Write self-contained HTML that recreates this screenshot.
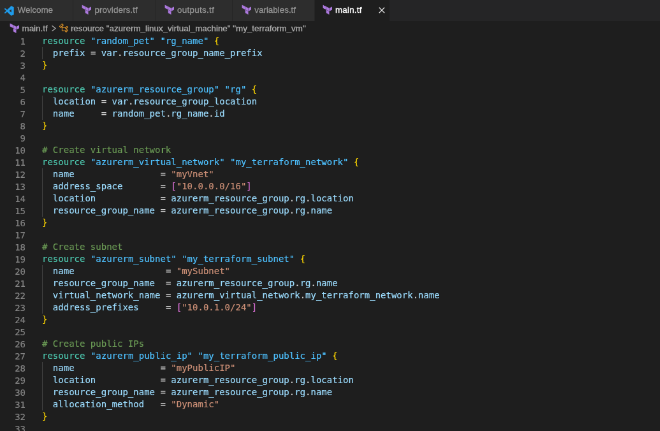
<!DOCTYPE html>
<html><head><meta charset="utf-8"><title>main.tf</title>
<style>
html,body{margin:0;padding:0;background:#1e1e1e;overflow:hidden}
body{width:660px;height:431px;position:relative}
#app{position:absolute;left:0;top:0;width:1036px;height:680px;transform-origin:0 0;transform:scale(0.6374);will-change:transform;background:#1e1e1e;font-family:"Liberation Sans",Arial,sans-serif;color:#ccc}
#tabs{position:absolute;left:0;top:-2.2px;width:100%;height:35px;background:#252526}
.tab{position:absolute;top:0;height:35px;background:#2d2d2d;border-right:1px solid #252526;box-sizing:border-box;color:#969696;font-size:13.4px;line-height:35px;white-space:nowrap}
.tab.act{background:#1e1e1e;color:#fff}
.tab .lbl{position:absolute;top:0;-webkit-text-stroke:.3px currentColor}
#bc span{-webkit-text-stroke:.3px currentColor}
#ed{-webkit-text-stroke:.2px currentColor}
.tfi{position:absolute;width:16px;height:16px}
#bc{position:absolute;left:0;top:32.8px;width:100%;height:22px;background:#1e1e1e;color:#b0b0b0;font-size:13.4px;line-height:22px;white-space:nowrap}
#bc span{position:absolute;top:1.4px}
#ed{position:absolute;left:0;top:55.1px;width:100%;height:640px;font-family:"DejaVu Sans Mono","Liberation Mono",monospace;font-size:14px;line-height:19px;color:#d4d4d4}
.ln{position:absolute;left:0;height:19px;width:100%;white-space:pre}
.num{position:absolute;left:0;top:1px;width:40px;text-align:right;color:#858585}
.tx{position:absolute;left:66px;top:0}
.g{position:absolute;left:65.95px;width:1.5px;background:#404040}
.c{color:#6a9955}.k{color:#4ec9b0}.e{color:#4fc1ff}.v{color:#9cdcfe}.o{color:#d4d4d4}.s{color:#ce9178}.b1{color:#ffd700}.b2{color:#da70d6}
</style></head><body>
<div id="app">
<div id="tabs">
<div class="tab" style="left:0.0px;width:114.5px"><svg class="tfi" style="left:5.5px;top:11px" viewBox="0 0 16 16"><path fill="#1f9cec" fill-rule="evenodd" d="M11.6 .3L15.7 2.2V13.8L11.6 15.7 5.2 9.8 2.2 12.1 .4 11.2 3.9 8 .4 4.8 2.2 3.9 5.2 6.2zM11.8 5.5L8.4 8l3.4 2.5z"/></svg><span class="lbl" style="left:27.5px;letter-spacing:0.00px">Welcome</span></div>
<div class="tab" style="left:114.5px;width:130.2px"><svg class="tfi" style="left:12.6px;top:9.4px" viewBox="0 0 16 16"><g fill="#ad7adf" stroke="#ad7adf" stroke-width="0.9" transform="translate(1.5,0.5) scale(0.222,0.198)"><path d="M1 1.3l20.6 11.9V37L1 25.1zM23.9 14.5l20.6 11.9v23.8L23.9 38.3zM46.8 26.4l20.6-11.9v23.8L46.8 50.2zM23.9 40.9l20.6 11.9v23.8L23.9 64.7z"/></g></svg><span class="lbl" style="left:33.9px;letter-spacing:0.10px">providers.tf</span></div>
<div class="tab" style="left:244.7px;width:120.0px"><svg class="tfi" style="left:12.6px;top:9.4px" viewBox="0 0 16 16"><g fill="#ad7adf" stroke="#ad7adf" stroke-width="0.9" transform="translate(1.5,0.5) scale(0.222,0.198)"><path d="M1 1.3l20.6 11.9V37L1 25.1zM23.9 14.5l20.6 11.9v23.8L23.9 38.3zM46.8 26.4l20.6-11.9v23.8L46.8 50.2zM23.9 40.9l20.6 11.9v23.8L23.9 64.7z"/></g></svg><span class="lbl" style="left:33.4px;letter-spacing:0.30px">outputs.tf</span></div>
<div class="tab" style="left:364.8px;width:129.4px"><svg class="tfi" style="left:13.3px;top:9.4px" viewBox="0 0 16 16"><g fill="#ad7adf" stroke="#ad7adf" stroke-width="0.9" transform="translate(1.5,0.5) scale(0.222,0.198)"><path d="M1 1.3l20.6 11.9V37L1 25.1zM23.9 14.5l20.6 11.9v23.8L23.9 38.3zM46.8 26.4l20.6-11.9v23.8L46.8 50.2zM23.9 40.9l20.6 11.9v23.8L23.9 64.7z"/></g></svg><span class="lbl" style="left:34.5px;letter-spacing:0.00px">variables.tf</span></div>
<div class="tab act" style="left:494.2px;width:117.7px"><svg class="tfi" style="left:11.0px;top:9.4px" viewBox="0 0 16 16"><g fill="#ad7adf" stroke="#ad7adf" stroke-width="0.9" transform="translate(1.5,0.5) scale(0.222,0.198)"><path d="M1 1.3l20.6 11.9V37L1 25.1zM23.9 14.5l20.6 11.9v23.8L23.9 38.3zM46.8 26.4l20.6-11.9v23.8L46.8 50.2zM23.9 40.9l20.6 11.9v23.8L23.9 64.7z"/></g></svg><span class="lbl" style="left:31.8px;letter-spacing:0.20px">main.tf</span><svg style="position:absolute;left:99.8px;top:13.3px;width:10px;height:10px" viewBox="0 0 10 10"><path d="M0.8 0.8L9.2 9.2M9.2 0.8L0.8 9.2" stroke="#e0e0e0" stroke-width="1.3" fill="none"/></svg></div>
</div>
<div id="bc"><svg class="tfi" style="left:14.1px;top:3px" viewBox="0 0 16 16"><g fill="#ad7adf" stroke="#ad7adf" stroke-width="0.9" transform="translate(1.5,0.5) scale(0.222,0.198)"><path d="M1 1.3l20.6 11.9V37L1 25.1zM23.9 14.5l20.6 11.9v23.8L23.9 38.3zM46.8 26.4l20.6-11.9v23.8L46.8 50.2zM23.9 40.9l20.6 11.9v23.8L23.9 64.7z"/></g></svg><span style="left:34.5px">main.tf</span><svg style="position:absolute;left:80.3px;top:6.5px;width:9px;height:11px" viewBox="0 0 9 11"><path d="M1.5 1.3L7 5.5 1.5 9.7" stroke="#b0b0b0" stroke-width="1.3" fill="none"/></svg><svg style="position:absolute;left:91.8px;top:3px;width:16px;height:16px" viewBox="0 0 16 16"><path fill="#ee9d28" d="M11.34 9.71h.71l2.67-2.67v-.71L13.38 5h-.7l-1.82 1.81h-5V5.56l1.86-1.85V3l-2-2H5L1 5v.71l2 2h.71l1.14-1.15v5.79l.5.5H10v.52l1.33 1.34h.71l2.67-2.67v-.71L13.37 10h-.7l-1.86 1.85h-5v-4H10v.48l1.34 1.38zm1.69-3.65l.63.63-2 2-.63-.63 2-2zm-8-4l1.23 1.23-3 3-1.28-1.28 3.05-2.95zm8 9l.63.63-2 2-.63-.63 2-2z"/></svg><span style="left:110.9px">resource "azurerm_linux_virtual_machine" "my_terraform_vm"</span></div>
<div id="ed"><i class="g" style="top:19px;height:19px"></i><i class="g" style="top:95px;height:38px"></i><i class="g" style="top:209px;height:76px"></i><i class="g" style="top:361px;height:76px"></i><i class="g" style="top:513px;height:76px"></i><div class="ln" style="top:0px"><span class="num">1</span><span class="tx"><span class="k">resource</span> <span class="e">"random_pet"</span> <span class="e">"rg_name"</span> <span class="b1">{</span></span></div>
<div class="ln" style="top:19px"><span class="num">2</span><span class="tx">  <span class="v">prefix</span> <span class="o">=</span> <span class="v">var</span><span class="o">.</span><span class="v">resource_group_name_prefix</span></span></div>
<div class="ln" style="top:38px"><span class="num">3</span><span class="tx"><span class="b1">}</span></span></div>
<div class="ln" style="top:57px"><span class="num">4</span><span class="tx"></span></div>
<div class="ln" style="top:76px"><span class="num">5</span><span class="tx"><span class="k">resource</span> <span class="e">"azurerm_resource_group"</span> <span class="e">"rg"</span> <span class="b1">{</span></span></div>
<div class="ln" style="top:95px"><span class="num">6</span><span class="tx">  <span class="v">location</span> <span class="o">=</span> <span class="v">var</span><span class="o">.</span><span class="v">resource_group_location</span></span></div>
<div class="ln" style="top:114px"><span class="num">7</span><span class="tx">  <span class="v">name</span>     <span class="o">=</span> <span class="v">random_pet</span><span class="o">.</span><span class="v">rg_name</span><span class="o">.</span><span class="v">id</span></span></div>
<div class="ln" style="top:133px"><span class="num">8</span><span class="tx"><span class="b1">}</span></span></div>
<div class="ln" style="top:152px"><span class="num">9</span><span class="tx"></span></div>
<div class="ln" style="top:171px"><span class="num">10</span><span class="tx"><span class="c"># Create virtual network</span></span></div>
<div class="ln" style="top:190px"><span class="num">11</span><span class="tx"><span class="k">resource</span> <span class="e">"azurerm_virtual_network"</span> <span class="e">"my_terraform_network"</span> <span class="b1">{</span></span></div>
<div class="ln" style="top:209px"><span class="num">12</span><span class="tx">  <span class="v">name</span>                <span class="o">=</span> <span class="s">"myVnet"</span></span></div>
<div class="ln" style="top:228px"><span class="num">13</span><span class="tx">  <span class="v">address_space</span>       <span class="o">=</span> <span class="b2">[</span><span class="s">"10.0.0.0/16"</span><span class="b2">]</span></span></div>
<div class="ln" style="top:247px"><span class="num">14</span><span class="tx">  <span class="v">location</span>            <span class="o">=</span> <span class="v">azurerm_resource_group</span><span class="o">.</span><span class="v">rg</span><span class="o">.</span><span class="v">location</span></span></div>
<div class="ln" style="top:266px"><span class="num">15</span><span class="tx">  <span class="v">resource_group_name</span> <span class="o">=</span> <span class="v">azurerm_resource_group</span><span class="o">.</span><span class="v">rg</span><span class="o">.</span><span class="v">name</span></span></div>
<div class="ln" style="top:285px"><span class="num">16</span><span class="tx"><span class="b1">}</span></span></div>
<div class="ln" style="top:304px"><span class="num">17</span><span class="tx"></span></div>
<div class="ln" style="top:323px"><span class="num">18</span><span class="tx"><span class="c"># Create subnet</span></span></div>
<div class="ln" style="top:342px"><span class="num">19</span><span class="tx"><span class="k">resource</span> <span class="e">"azurerm_subnet"</span> <span class="e">"my_terraform_subnet"</span> <span class="b1">{</span></span></div>
<div class="ln" style="top:361px"><span class="num">20</span><span class="tx">  <span class="v">name</span>                 <span class="o">=</span> <span class="s">"mySubnet"</span></span></div>
<div class="ln" style="top:380px"><span class="num">21</span><span class="tx">  <span class="v">resource_group_name</span>  <span class="o">=</span> <span class="v">azurerm_resource_group</span><span class="o">.</span><span class="v">rg</span><span class="o">.</span><span class="v">name</span></span></div>
<div class="ln" style="top:399px"><span class="num">22</span><span class="tx">  <span class="v">virtual_network_name</span> <span class="o">=</span> <span class="v">azurerm_virtual_network</span><span class="o">.</span><span class="v">my_terraform_network</span><span class="o">.</span><span class="v">name</span></span></div>
<div class="ln" style="top:418px"><span class="num">23</span><span class="tx">  <span class="v">address_prefixes</span>     <span class="o">=</span> <span class="b2">[</span><span class="s">"10.0.1.0/24"</span><span class="b2">]</span></span></div>
<div class="ln" style="top:437px"><span class="num">24</span><span class="tx"><span class="b1">}</span></span></div>
<div class="ln" style="top:456px"><span class="num">25</span><span class="tx"></span></div>
<div class="ln" style="top:475px"><span class="num">26</span><span class="tx"><span class="c"># Create public IPs</span></span></div>
<div class="ln" style="top:494px"><span class="num">27</span><span class="tx"><span class="k">resource</span> <span class="e">"azurerm_public_ip"</span> <span class="e">"my_terraform_public_ip"</span> <span class="b1">{</span></span></div>
<div class="ln" style="top:513px"><span class="num">28</span><span class="tx">  <span class="v">name</span>                <span class="o">=</span> <span class="s">"myPublicIP"</span></span></div>
<div class="ln" style="top:532px"><span class="num">29</span><span class="tx">  <span class="v">location</span>            <span class="o">=</span> <span class="v">azurerm_resource_group</span><span class="o">.</span><span class="v">rg</span><span class="o">.</span><span class="v">location</span></span></div>
<div class="ln" style="top:551px"><span class="num">30</span><span class="tx">  <span class="v">resource_group_name</span> <span class="o">=</span> <span class="v">azurerm_resource_group</span><span class="o">.</span><span class="v">rg</span><span class="o">.</span><span class="v">name</span></span></div>
<div class="ln" style="top:570px"><span class="num">31</span><span class="tx">  <span class="v">allocation_method</span>   <span class="o">=</span> <span class="s">"Dynamic"</span></span></div>
<div class="ln" style="top:589px"><span class="num">32</span><span class="tx"><span class="b1">}</span></span></div>
<div class="ln" style="top:608px"><span class="num">33</span><span class="tx"></span></div></div>
</div>
</body></html>
